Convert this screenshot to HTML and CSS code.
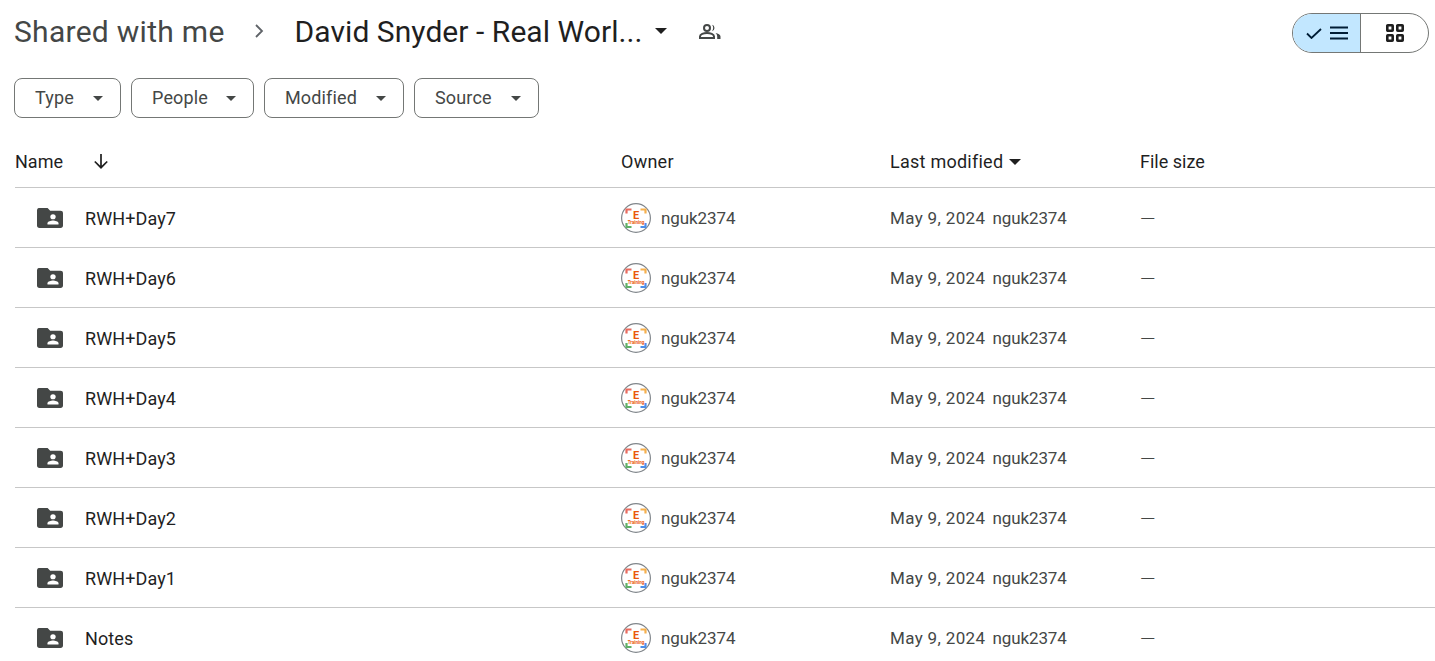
FILE: index.html
```html
<!DOCTYPE html>
<html lang="en">
<head>
<meta charset="utf-8">
<title>David Snyder - Real World</title>
<link rel="stylesheet" href="styles.css">
</head>
<body>
<svg class="defs" width="0" height="0" aria-hidden="true">
  <symbol id="folder" viewBox="0 0 26 21" preserveAspectRatio="none">
    <path fill="#444746" d="M3 0h7.600l2.600 2.800H23.400A2.600 2.600 0 0 1 26 5.400V18.400A2.600 2.600 0 0 1 23.400 21H2.600A2.600 2.600 0 0 1 0 18.400V2.600A2.600 2.600 0 0 1 3 0z"/>
    <circle cx="16" cy="9.200" r="2.700" fill="#fff"/>
    <path fill="#fff" d="M10.500 17.200v-1.300c0-1.900 3.600-2.900 5.500-2.900s5.500 1 5.500 2.900v1.300z"/>
  </symbol>
  <symbol id="corners" viewBox="0 0 30 30">
    <circle cx="15" cy="15" r="14.400" fill="#fff" stroke="#80868b" stroke-width="1.200"/>
    <path d="M5.500 10.500V6.500h5" fill="none" stroke="#ea6a5e" stroke-width="2.200"/>
    <path d="M19.500 6.500h5v4" fill="none" stroke="#f6b04d" stroke-width="2.200"/>
    <path d="M5.500 20v4h5" fill="none" stroke="#5fb168" stroke-width="2.200"/>
    <path d="M19.500 24h5v-4" fill="none" stroke="#4c8fe8" stroke-width="2.200"/>
  </symbol>
</svg>

<header class="topbar">
  <h1 class="crumbs">
    <span class="crumb-parent">Shared with me</span>
    <svg class="crumb-sep" width="10" height="16" viewBox="0 0 10 16"><path d="M2 2 8 8 2 14" fill="none" stroke="#5f6368" stroke-width="1.800"/></svg>
    <span class="crumb-current">David Snyder - Real Worl...</span>
    <span class="caret caret-title"></span>
    <svg class="people" width="22" height="15" viewBox="0 0 22 15"><circle cx="8" cy="4" r="3" fill="none" stroke="#444746" stroke-width="2"/><path d="M1 14v-1.500C1 10.300 4.600 9 8 9s7 1.300 7 3.500V14z" fill="none" stroke="#444746" stroke-width="2"/><path d="M13 .8a3.300 3.300 0 0 1 0 6.400c1.600-1.900 1.600-4.500 0-6.400zM16.500 9c2.600.6 5 1.700 5 3.600V15h-3.300v-2.500c0-1.400-.6-2.500-1.700-3.500z" fill="#444746"/></svg>
  </h1>
  <div class="view-toggle">
    <div class="view-list">
      <svg width="16" height="11" viewBox="0 0 16 11"><path d="M1 5.500 5.500 10 15 1" fill="none" stroke="#001d35" stroke-width="1.800"/></svg>
      <svg width="18" height="14" viewBox="0 0 18 14"><path d="M0 1.500h18M0 7h18M0 12.500h18" fill="none" stroke="#001d35" stroke-width="2.200"/></svg>
    </div>
    <div class="view-grid">
      <svg width="18" height="18" viewBox="0 0 18 18"><g fill="none" stroke="#1f1f1f" stroke-width="2.600"><rect x="1.300" y="1.300" width="5.400" height="5.400" rx=".5"/><rect x="11.300" y="1.300" width="5.400" height="5.400" rx=".5"/><rect x="1.300" y="11.300" width="5.400" height="5.400" rx=".5"/><rect x="11.300" y="11.300" width="5.400" height="5.400" rx=".5"/></g></svg>
    </div>
  </div>
</header>

<div class="filters">
  <button class="chip chip-type"><span class="chip-label">Type</span><span class="caret"></span></button>
  <button class="chip chip-people"><span class="chip-label">People</span><span class="caret"></span></button>
  <button class="chip chip-modified"><span class="chip-label">Modified</span><span class="caret"></span></button>
  <button class="chip chip-source"><span class="chip-label">Source</span><span class="caret"></span></button>
</div>

<main class="table">
  <div class="row head">
    <div class="name-head">Name
      <svg width="16" height="16" viewBox="0 0 16 16"><path d="M8 1v13.500M1.800 8.500 8 14.700l6.200-6.200" fill="none" stroke="#1f1f1f" stroke-width="1.700"/></svg>
    </div>
    <div class="wide-head">Owner</div>
    <div class="mod-head wide-head">Last modified<span class="caret caret-dark"></span></div>
    <div>File size</div>
  </div>

  <div class="row item"><div class="name"><svg class="folder"><use href="#folder"/></svg>RWH+Day7</div><div class="owner"><div class="avatar"><svg class="avatar-ring"><use href="#corners"/></svg><span class="avatar-e">E</span><span class="avatar-t">Training</span></div>nguk2374</div><div class="mod"><span class="date">May 9, 2024</span><span>nguk2374</span></div><div class="size">—</div></div>
  <div class="row item"><div class="name"><svg class="folder"><use href="#folder"/></svg>RWH+Day6</div><div class="owner"><div class="avatar"><svg class="avatar-ring"><use href="#corners"/></svg><span class="avatar-e">E</span><span class="avatar-t">Training</span></div>nguk2374</div><div class="mod"><span class="date">May 9, 2024</span><span>nguk2374</span></div><div class="size">—</div></div>
  <div class="row item"><div class="name"><svg class="folder"><use href="#folder"/></svg>RWH+Day5</div><div class="owner"><div class="avatar"><svg class="avatar-ring"><use href="#corners"/></svg><span class="avatar-e">E</span><span class="avatar-t">Training</span></div>nguk2374</div><div class="mod"><span class="date">May 9, 2024</span><span>nguk2374</span></div><div class="size">—</div></div>
  <div class="row item"><div class="name"><svg class="folder"><use href="#folder"/></svg>RWH+Day4</div><div class="owner"><div class="avatar"><svg class="avatar-ring"><use href="#corners"/></svg><span class="avatar-e">E</span><span class="avatar-t">Training</span></div>nguk2374</div><div class="mod"><span class="date">May 9, 2024</span><span>nguk2374</span></div><div class="size">—</div></div>
  <div class="row item"><div class="name"><svg class="folder"><use href="#folder"/></svg>RWH+Day3</div><div class="owner"><div class="avatar"><svg class="avatar-ring"><use href="#corners"/></svg><span class="avatar-e">E</span><span class="avatar-t">Training</span></div>nguk2374</div><div class="mod"><span class="date">May 9, 2024</span><span>nguk2374</span></div><div class="size">—</div></div>
  <div class="row item"><div class="name"><svg class="folder"><use href="#folder"/></svg>RWH+Day2</div><div class="owner"><div class="avatar"><svg class="avatar-ring"><use href="#corners"/></svg><span class="avatar-e">E</span><span class="avatar-t">Training</span></div>nguk2374</div><div class="mod"><span class="date">May 9, 2024</span><span>nguk2374</span></div><div class="size">—</div></div>
  <div class="row item"><div class="name"><svg class="folder"><use href="#folder"/></svg>RWH+Day1</div><div class="owner"><div class="avatar"><svg class="avatar-ring"><use href="#corners"/></svg><span class="avatar-e">E</span><span class="avatar-t">Training</span></div>nguk2374</div><div class="mod"><span class="date">May 9, 2024</span><span>nguk2374</span></div><div class="size">—</div></div>
  <div class="row item"><div class="name"><svg class="folder"><use href="#folder"/></svg>Notes</div><div class="owner"><div class="avatar"><svg class="avatar-ring"><use href="#corners"/></svg><span class="avatar-e">E</span><span class="avatar-t">Training</span></div>nguk2374</div><div class="mod"><span class="date">May 9, 2024</span><span>nguk2374</span></div><div class="size">—</div></div>
</main>
</body>
</html>
```
FILE: styles.css
```css
* { box-sizing: border-box; }
html, body { height: 100%; }
body {
  margin: 0;
  overflow: hidden;
  background: #fff;
  color: #1f1f1f;
  font-family: Roboto, "Liberation Sans", sans-serif;
  font-size: 16px;
}
.defs { position: absolute; }

.topbar {
  display: flex;
  align-items: center;
  justify-content: space-between;
  height: 64px;
  padding: 0 6px 0 14px;
}
.crumbs {
  display: flex;
  align-items: center;
  margin: 0 0 2px;
  font-size: 30px;
  font-weight: 400;
  white-space: nowrap;
}
.crumb-parent { color: #444746; letter-spacing: 0.28px; }
.crumb-sep { margin: 0 31px 0 29px; }
.crumb-current { color: #1f1f1f; letter-spacing: 0.05px; }
.caret {
  display: inline-block;
  width: 0;
  height: 0;
  border-left: 5px solid transparent;
  border-right: 5px solid transparent;
  border-top: 5px solid #444746;
}
.caret-title { margin-left: 13px; border-top-color: #1f1f1f; border-left-width: 6px; border-right-width: 6px; border-top-width: 6px; }
.people { margin-left: 32px; }

.view-toggle {
  display: flex;
  width: 137px;
  height: 40px;
  margin-top: 2px;
  border: 1px solid #747775;
  border-radius: 20px;
  overflow: hidden;
}
.view-list {
  display: flex;
  align-items: center;
  justify-content: center;
  gap: 8px;
  width: 68px;
  background: #c2e7ff;
  border-right: 1px solid #747775;
}
.view-grid {
  display: flex;
  flex: 1;
  align-items: center;
  justify-content: center;
}

.filters {
  display: flex;
  gap: 10px;
  padding: 14px 0 0 14px;
}
.chip {
  display: flex;
  align-items: center;
  justify-content: space-between;
  height: 40px;
  padding: 0 17px 0 20px;
  background: #fff;
  border: 1px solid #747775;
  border-radius: 8px;
  color: #444746;
  font-family: inherit;
  font-size: 18px;
  letter-spacing: 0.15px;
}
.chip-label { margin-bottom: 2px; }
.chip-type { width: 107px; }
.chip-people { width: 123px; }
.chip-modified { width: 140px; }
.chip-source { width: 125px; }

.table { margin: 20px 0 0 15px; }
.row {
  display: grid;
  grid-template-columns: 606px 269px 250px 1fr;
  align-items: center;
  border-bottom: 1px solid #c7c7c7;
}
.head {
  height: 50px;
  font-size: 18px;
  color: #1f1f1f;
  padding-bottom: 3px;
}
.wide-head { letter-spacing: 0.25px; }
.name-head { display: flex; align-items: center; gap: 30px; }
.mod-head { display: flex; align-items: center; gap: 6px; }
.caret-dark { border-top-color: #1f1f1f; border-left-width: 6px; border-right-width: 6px; border-top-width: 6px; margin-top: 2px; }
.item { height: 60px; font-size: 17px; }
.name {
  display: flex;
  align-items: center;
  padding: 2px 0 0 22px;
  color: #1f1f1f;
  font-size: 18px;
  letter-spacing: 0.1px;
}
.folder { width: 26px; height: 20px; margin: 0 22px 2px 0; }
.owner {
  display: flex;
  align-items: center;
  gap: 10px;
  color: #444746;
  letter-spacing: -0.1px;
}
.avatar {
  position: relative;
  display: flex;
  flex-direction: column;
  align-items: center;
  justify-content: center;
  width: 30px;
  height: 30px;
  padding-top: 2px;
}
.avatar-ring { position: absolute; inset: 0; width: 30px; height: 30px; }
.avatar-e {
  position: relative;
  font-size: 11px;
  font-weight: 700;
  line-height: 9px;
  color: #ea580c;
  letter-spacing: 0;
}
.avatar-t {
  position: relative;
  font-size: 4.5px;
  font-weight: 700;
  line-height: 6px;
  color: #ea580c;
  letter-spacing: 0;
}
.mod { display: flex; gap: 7px; color: #444746; letter-spacing: -0.1px; }
.date { letter-spacing: 0.35px; }
.size { padding-top: 2px; color: #444746; font-size: 20px; font-weight: 300; }
```
